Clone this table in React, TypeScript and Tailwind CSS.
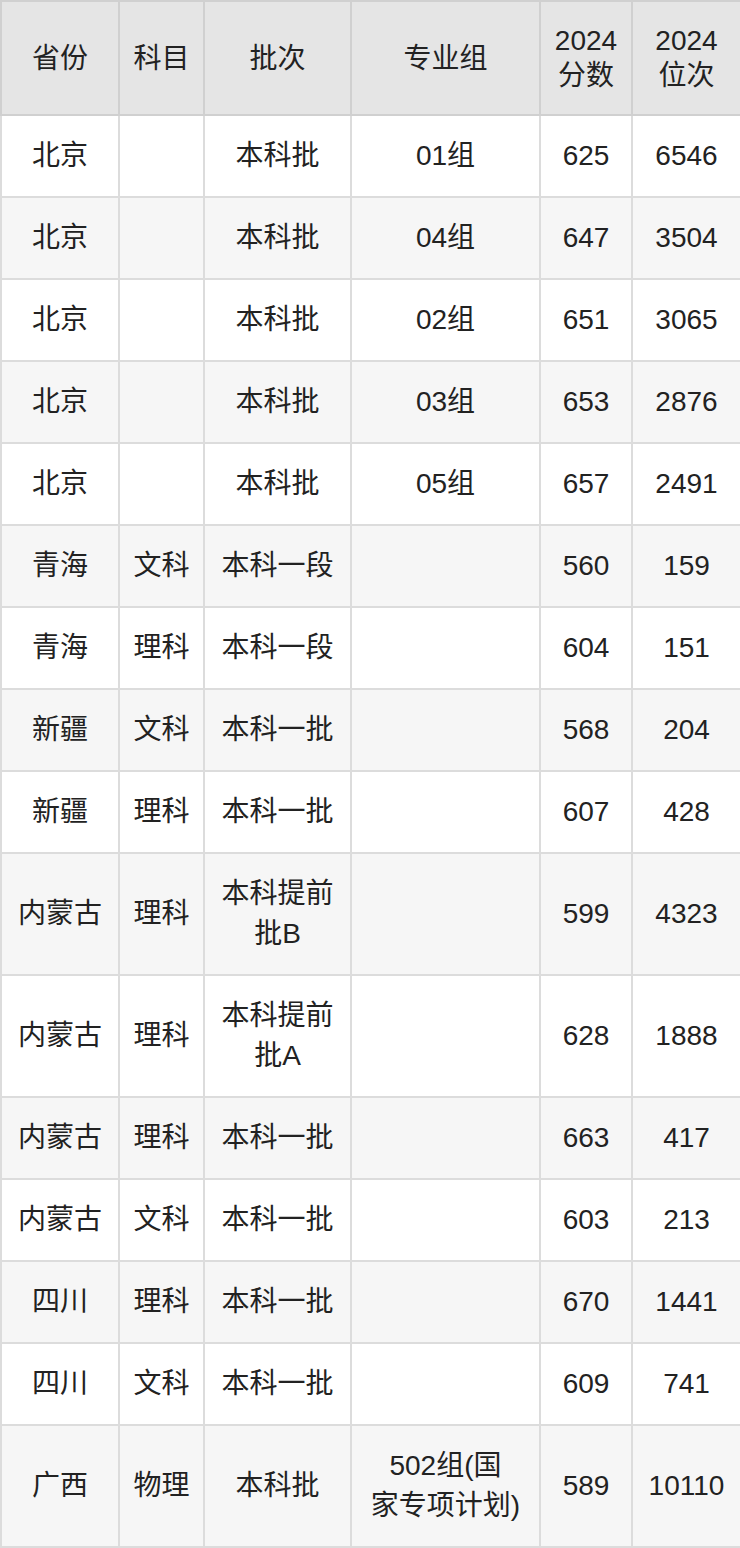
import React from "react";

type Row = {
  province: string;
  subject: string;
  batch: React.ReactNode;
  group: React.ReactNode;
  score: string;
  rank: string;
  tall?: boolean;
};

const rows: Row[] = [
  { province: "北京", subject: "", batch: "本科批", group: "01组", score: "625", rank: "6546" },
  { province: "北京", subject: "", batch: "本科批", group: "04组", score: "647", rank: "3504" },
  { province: "北京", subject: "", batch: "本科批", group: "02组", score: "651", rank: "3065" },
  { province: "北京", subject: "", batch: "本科批", group: "03组", score: "653", rank: "2876" },
  { province: "北京", subject: "", batch: "本科批", group: "05组", score: "657", rank: "2491" },
  { province: "青海", subject: "文科", batch: "本科一段", group: "", score: "560", rank: "159" },
  { province: "青海", subject: "理科", batch: "本科一段", group: "", score: "604", rank: "151" },
  { province: "新疆", subject: "文科", batch: "本科一批", group: "", score: "568", rank: "204" },
  { province: "新疆", subject: "理科", batch: "本科一批", group: "", score: "607", rank: "428" },
  {
    province: "内蒙古",
    subject: "理科",
    batch: (
      <>
        本科提前
        <br />
        批B
      </>
    ),
    group: "",
    score: "599",
    rank: "4323",
    tall: true,
  },
  {
    province: "内蒙古",
    subject: "理科",
    batch: (
      <>
        本科提前
        <br />
        批A
      </>
    ),
    group: "",
    score: "628",
    rank: "1888",
    tall: true,
  },
  { province: "内蒙古", subject: "理科", batch: "本科一批", group: "", score: "663", rank: "417" },
  { province: "内蒙古", subject: "文科", batch: "本科一批", group: "", score: "603", rank: "213" },
  { province: "四川", subject: "理科", batch: "本科一批", group: "", score: "670", rank: "1441" },
  { province: "四川", subject: "文科", batch: "本科一批", group: "", score: "609", rank: "741" },
  {
    province: "广西",
    subject: "物理",
    batch: "本科批",
    group: (
      <>
        502组(国
        <br />
        家专项计划)
      </>
    ),
    score: "589",
    rank: "10110",
    tall: true,
  },
];

const th = "border-2 border-[#d0d0d0] bg-[#e5e5e5] font-normal text-center align-middle leading-[35px]";
const td = "border-2 border-[#dcdcdc] text-center align-middle leading-[40px]";

export default function App() {
  return (
    <div
      className="w-[740px] bg-white text-[#222] text-[28px]"
      style={{ fontFamily: '"Liberation Sans", "Noto Sans CJK SC", sans-serif' }}
    >
      <table className="w-[740px] table-fixed border-collapse">
        <colgroup>
          <col className="w-[118px]" />
          <col className="w-[85px]" />
          <col className="w-[147px]" />
          <col className="w-[189px]" />
          <col className="w-[92px]" />
          <col className="w-[109px]" />
        </colgroup>
        <thead>
          <tr className="h-[114px]">
            <th className={th}>省份</th>
            <th className={th}>科目</th>
            <th className={th}>批次</th>
            <th className={th}>专业组</th>
            <th className={th}>
              2024
              <br />
              分数
            </th>
            <th className={th}>
              2024
              <br />
              位次
            </th>
          </tr>
        </thead>
        <tbody>
          {rows.map((r, i) => (
            <tr
              key={i}
              className={`${r.tall ? "h-[122px]" : "h-[82px]"} ${i % 2 === 1 ? "bg-[#f6f6f6]" : "bg-white"}`}
            >
              <td className={td}>{r.province}</td>
              <td className={td}>{r.subject}</td>
              <td className={td}>{r.batch}</td>
              <td className={td}>{r.group}</td>
              <td className={td}>{r.score}</td>
              <td className={td}>{r.rank}</td>
            </tr>
          ))}
        </tbody>
      </table>
    </div>
  );
}
